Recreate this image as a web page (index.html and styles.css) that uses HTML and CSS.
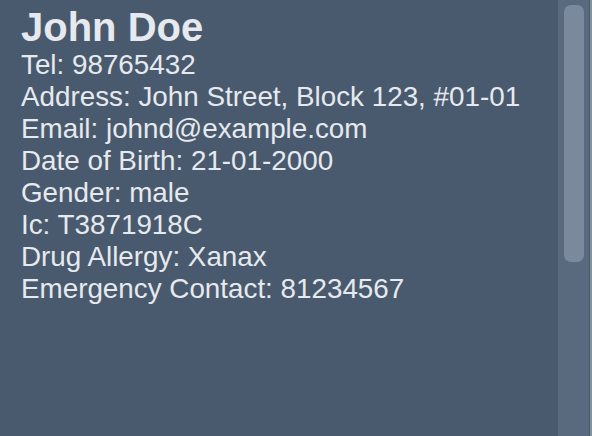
FILE: index.html
```html
<!DOCTYPE html>
<html>
<head>
<meta charset="utf-8">
<link rel="stylesheet" href="styles.css">
</head>
<body>
<div class="pane">
  <div class="content">
    <div class="name">John Doe</div>
    <div class="line">Tel: 98765432</div>
    <div class="line">Address: John Street, Block 123, #01-01</div>
    <div class="line">Email: johnd@example.com</div>
    <div class="line">Date of Birth: 21-01-2000</div>
    <div class="line">Gender: male</div>
    <div class="line">Ic: T3871918C</div>
    <div class="line">Drug Allergy: Xanax</div>
    <div class="line">Emergency Contact: 81234567</div>
  </div>
  <div class="scrollbar">
    <div class="thumb"></div>
  </div>
  <div class="edge"></div>
</div>
</body>
</html>
```
FILE: styles.css
```css
html, body {
  margin: 0;
  padding: 0;
  background: #495a6e;
}
.pane {
  display: flex;
  width: 592px;
  height: 436px;
  background: #495a6e;
  overflow: hidden;
}
.content {
  flex: 1;
  padding: 5px 0 0 21px;
  font-family: "Liberation Sans", Arial, sans-serif;
  color: #e6e9ed;
}
.name {
  font-size: 40px;
  font-weight: bold;
  line-height: 44px;
}
.line {
  font-size: 27.8px;
  line-height: 32px;
}
.scrollbar {
  width: 31px;
  background: #5a6a7e;
  padding: 5px 0 0 6px;
  box-sizing: border-box;
}
.thumb {
  width: 20px;
  height: 257px;
  border-radius: 7px;
  background: #7a8a9c;
}
.edge {
  width: 1px;
  background: #4a596c;
  border-right: 2px solid #8592a2;
}
```
